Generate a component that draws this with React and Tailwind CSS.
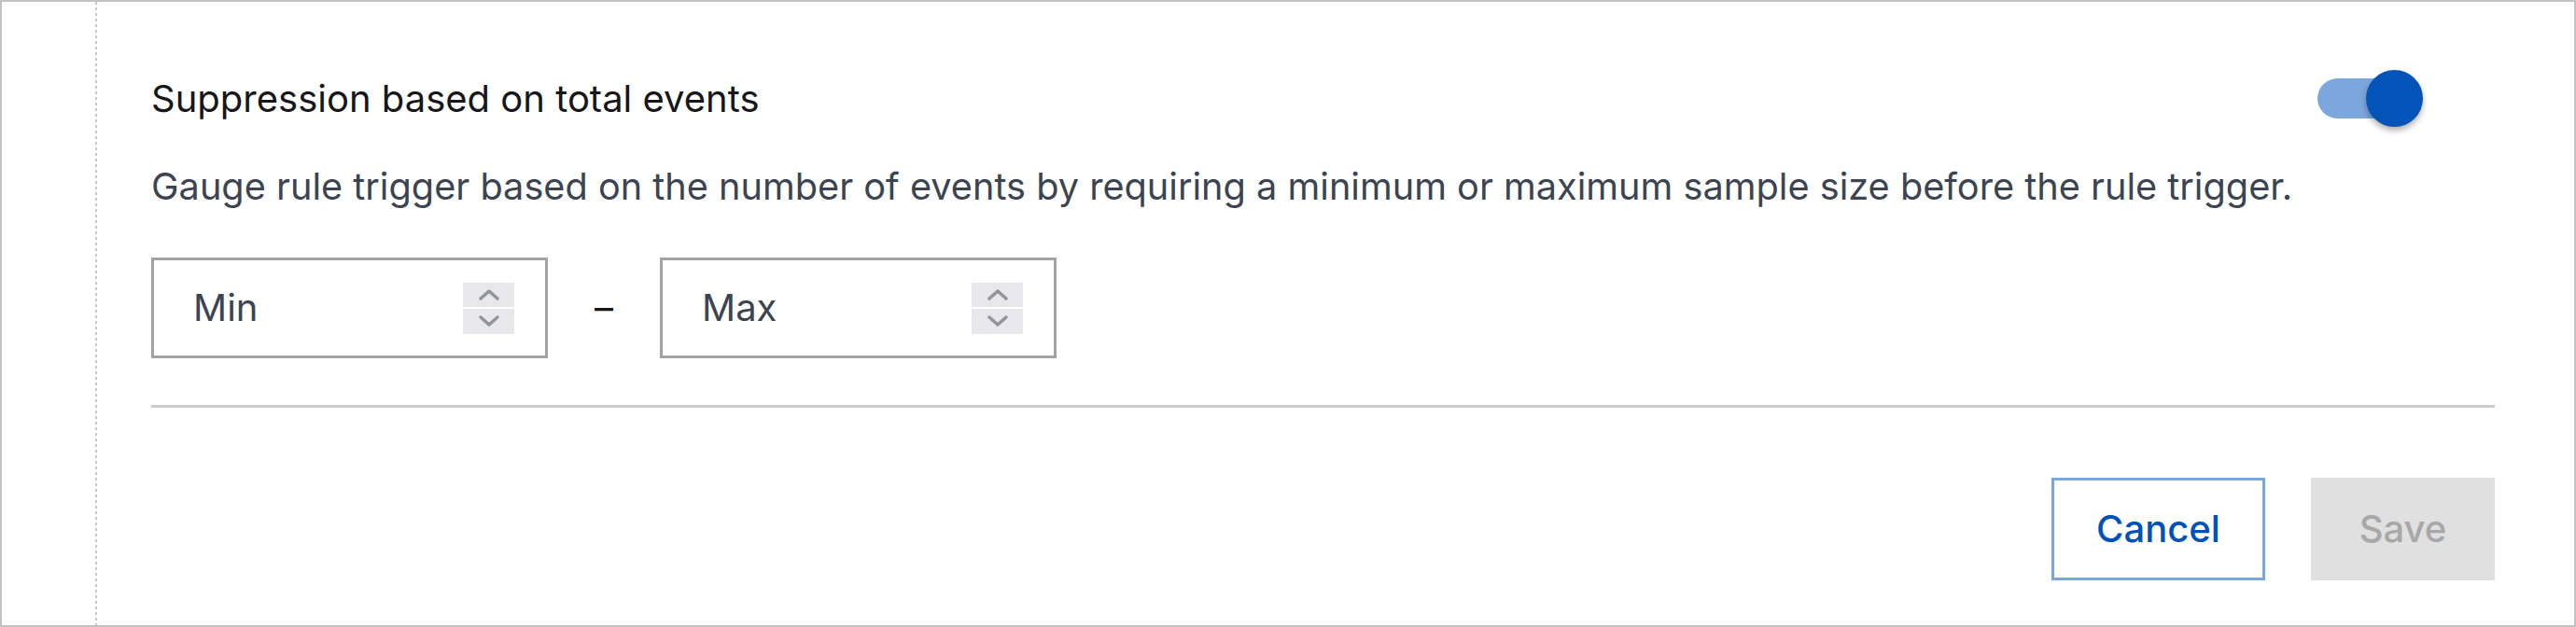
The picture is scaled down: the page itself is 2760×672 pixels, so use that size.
function Chevron({ up }) {
  return (
    <svg width="24" height="14" viewBox="0 0 24 14" fill="none">
      <polyline
        points={up ? "3,11 12,3 21,11" : "3,3 12,11 21,3"}
        stroke="#93939e"
        strokeWidth="3.5"
        strokeLinecap="round"
        strokeLinejoin="round"
      />
    </svg>
  );
}

function NumberBox({ placeholder }) {
  return (
    <div className="w-[425px] h-[108px] border-[3px] border-[#a3a3a3] flex items-center justify-between pl-[42px] pr-[33px]">
      <span className="text-[40px] text-[#3d4451] leading-none">{placeholder}</span>
      <div className="w-[55px] h-[55px] flex flex-col gap-[2px]">
        <div className="flex-1 bg-[#e7e7ec] flex items-center justify-center">
          <Chevron up />
        </div>
        <div className="flex-1 bg-[#e7e7ec] flex items-center justify-center">
          <Chevron />
        </div>
      </div>
    </div>
  );
}

export default function App() {
  return (
    <div className="w-[2760px] h-[672px] bg-white border-2 border-[#c2c2c2] flex font-['Inter',sans-serif]">
      <div className="w-[100px] shrink-0" />
      <div className="w-[2px] shrink-0 bg-[repeating-linear-gradient(to_bottom,#c8c8c8_0px,#c8c8c8_3px,transparent_3px,transparent_6px)]" />
      <div className="flex-1 flex flex-col pl-[58px] pr-[85px] pt-[73px]">
        <div className="h-[61px] flex items-center justify-between">
          <h2 className="text-[40px] leading-[48px] text-[#16161b]">Suppression based on total events</h2>
          <div className="relative w-[113px] h-[61px] mr-[77px]">
            <div className="absolute left-0 top-[9px] w-[92px] h-[43px] rounded-full bg-[#7ca7dc]" />
            <div className="absolute right-0 top-0 w-[61px] h-[61px] rounded-full bg-[#0353b9] shadow-[0_4px_6px_rgba(0,0,0,0.3)]" />
          </div>
        </div>
        <p className="mt-[40px] text-[39.7px] leading-[48px] text-[#3d4451]">
          Gauge rule trigger based on the number of events by requiring a minimum or maximum sample size before the rule trigger.
        </p>
        <div className="mt-[52px] flex items-center gap-[50px]">
          <NumberBox placeholder="Min" />
          <span className="text-[40px] leading-none text-[#16161b]">–</span>
          <NumberBox placeholder="Max" />
        </div>
        <div className="mt-[50px] h-[3px] bg-[#cccccc]" />
        <div className="mt-[75px] flex justify-end gap-[49px]">
          <button className="w-[229px] h-[110px] border-[3px] border-[#7ba6dc] text-[40px] text-[#0052b8] font-medium">
            Cancel
          </button>
          <button className="w-[197px] h-[110px] bg-[#e0e0e0] text-[40px] text-[#a8a8a8] font-medium">
            Save
          </button>
        </div>
      </div>
    </div>
  );
}
